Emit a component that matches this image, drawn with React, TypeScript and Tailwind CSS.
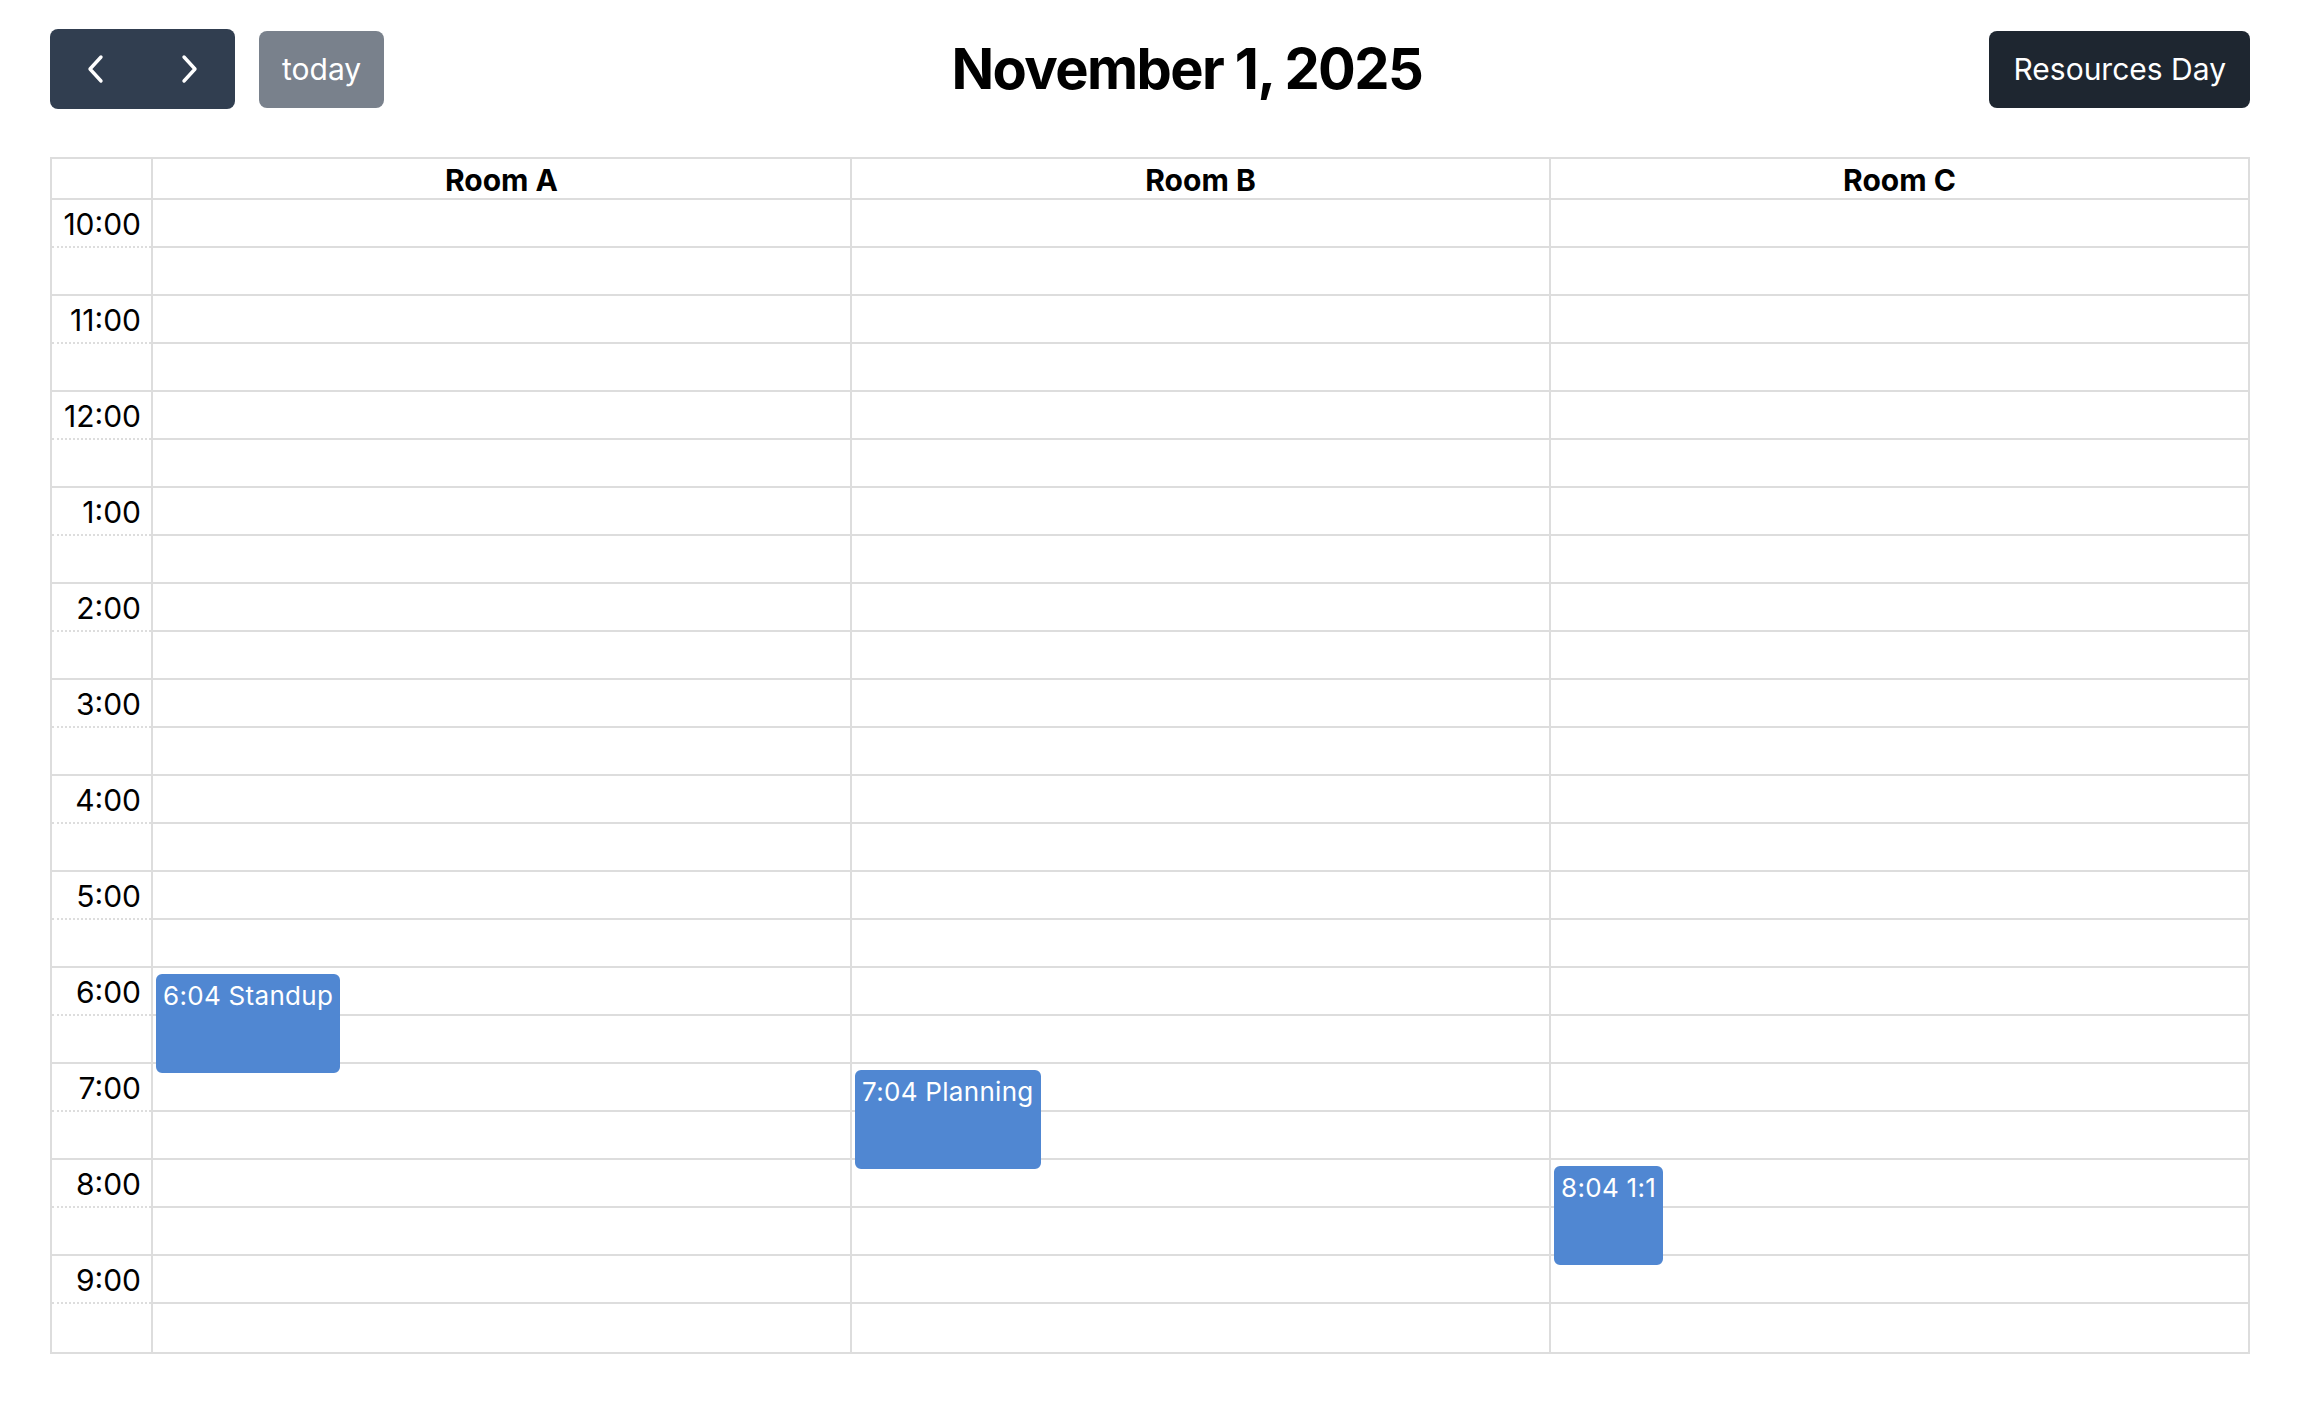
import React from 'react'

const rooms = ['Room A', 'Room B', 'Room C']

const hours = ['10:00', '11:00', '12:00', '1:00', '2:00', '3:00', '4:00', '5:00', '6:00', '7:00', '8:00', '9:00']

// start of the grid is 10:00, one hour = 96px
const HOUR = 96

const events = [
  { room: 0, label: '6:04 Standup', hourIndex: 8, minute: 4 },
  { room: 1, label: '7:04 Planning', hourIndex: 9, minute: 4 },
  { room: 2, label: '8:04 1:1', hourIndex: 10, minute: 4 },
]

function Chevron({ dir }: { dir: 'left' | 'right' }) {
  return (
    <svg width="20" height="30" viewBox="0 0 20 30" fill="none">
      <path
        d={dir === 'left' ? 'M15 3 L4 15 L15 27' : 'M5 3 L16 15 L5 27'}
        stroke="white"
        strokeWidth="3.4"
        strokeLinecap="round"
        strokeLinejoin="round"
      />
    </svg>
  )
}

export default function App() {
  return (
    <div className="min-h-screen bg-white pl-[50px] pr-[48px] pt-[29px] font-['Inter','Noto_Sans',sans-serif] text-black">
      {/* Toolbar */}
      <div className="flex h-[80px] items-center justify-between">
        <div className="flex items-center gap-[24px]">
          <div className="flex h-[80px] overflow-hidden rounded-[8px] bg-[#313e50]">
            <button className="flex w-[92px] items-center justify-center">
              <Chevron dir="left" />
            </button>
            <button className="flex w-[93px] items-center justify-center">
              <Chevron dir="right" />
            </button>
          </div>
          <button className="h-[77px] rounded-[8px] bg-[#79818c] px-[23px] text-[30px] leading-[36px] text-white">
            today
          </button>
        </div>

        <h2 className="text-[56px] font-bold leading-[68px] tracking-[-1.6px]">November 1, 2025</h2>

        <button className="h-[77px] rounded-[8px] bg-[#1e2630] px-[24px] text-[30px] leading-[36px] text-white">
          Resources Day
        </button>
      </div>

      {/* Resource grid */}
      <div className="mt-[48px] border-2 border-[#dddddd]">
        {/* Header */}
        <div className="flex border-b-2 border-[#dddddd]">
          <div className="w-[101px] shrink-0 border-r-2 border-[#dddddd]" />
          {rooms.map((room, i) => (
            <div
              key={room}
              className={`flex h-[39px] flex-1 items-center justify-center pt-[2px] text-[30px] font-bold leading-[34px] ${
                i < rooms.length - 1 ? 'border-r-2 border-[#dddddd]' : ''
              }`}
            >
              {room}
            </div>
          ))}
        </div>

        {/* Body */}
        <div className="flex">
          {/* Time labels */}
          <div className="w-[101px] shrink-0 border-r-2 border-[#dddddd]">
            {hours.map((h, i) => (
              <React.Fragment key={h}>
                <div className="h-[48px] border-b-2 border-dotted border-[#dddddd] pr-[10px] pt-[6px] text-right text-[30px] leading-[36px]">
                  {h}
                </div>
                <div className={`h-[48px] ${i < hours.length - 1 ? 'border-b-2 border-[#dddddd]' : ''}`} />
              </React.Fragment>
            ))}
          </div>

          {/* Lanes */}
          {rooms.map((room, r) => (
            <div
              key={room}
              className={`relative min-w-0 flex-1 ${r < rooms.length - 1 ? 'border-r-2 border-[#dddddd]' : ''}`}
            >
              {Array.from({ length: hours.length * 2 }).map((_, s) => (
                <div
                  key={s}
                  className={`h-[48px] ${s < hours.length * 2 - 1 ? 'border-b-2 border-[#dddddd]' : ''}`}
                />
              ))}

              {events
                .filter((e) => e.room === r)
                .map((e) => (
                  <div
                    key={e.label}
                    className="absolute left-[3px] h-[99px] whitespace-nowrap rounded-[6px] border-2 border-[#5087d2] bg-[#5087d2] pl-[5px] pr-[5px] pt-[5px] text-[26px] leading-[30px] tracking-[0.3px] text-white"
                    style={{ top: e.hourIndex * HOUR + (e.minute / 60) * HOUR }}
                  >
                    {e.label}
                  </div>
                ))}
            </div>
          ))}
        </div>
      </div>
    </div>
  )
}
